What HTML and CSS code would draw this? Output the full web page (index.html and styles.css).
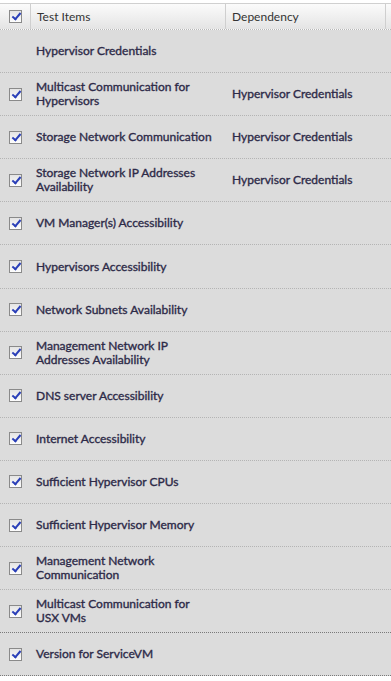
FILE: index.html
```html
<!DOCTYPE html>
<html lang="en">
<head>
    <meta charset="UTF-8">
    <meta name="viewport" content="width=device-width, initial-scale=1.0">
    <title>Test Items</title>
    <link rel="stylesheet" href="styles.css">
</head>
<body>
    <div class="grid">
        <div class="head">
            <div class="cell check"><span class="box on"></span></div>
            <div class="cell name">Test Items</div>
            <div class="cell dep">Dependency</div>
            <div class="cell pad"></div>
        </div>

        <div class="row">
            <div class="cell check"></div>
            <div class="cell name">Hypervisor Credentials</div>
            <div class="cell dep"></div>
        </div>
        <div class="row">
            <div class="cell check"><span class="box on"></span></div>
            <div class="cell name">Multicast Communication for Hypervisors</div>
            <div class="cell dep">Hypervisor Credentials</div>
        </div>
        <div class="row">
            <div class="cell check"><span class="box on"></span></div>
            <div class="cell name">Storage Network Communication</div>
            <div class="cell dep">Hypervisor Credentials</div>
        </div>
        <div class="row">
            <div class="cell check"><span class="box on"></span></div>
            <div class="cell name">Storage Network IP Addresses Availability</div>
            <div class="cell dep">Hypervisor Credentials</div>
        </div>
        <div class="row">
            <div class="cell check"><span class="box on"></span></div>
            <div class="cell name">VM Manager(s) Accessibility</div>
            <div class="cell dep"></div>
        </div>
        <div class="row">
            <div class="cell check"><span class="box on"></span></div>
            <div class="cell name">Hypervisors Accessibility</div>
            <div class="cell dep"></div>
        </div>
        <div class="row">
            <div class="cell check"><span class="box on"></span></div>
            <div class="cell name">Network Subnets Availability</div>
            <div class="cell dep"></div>
        </div>
        <div class="row">
            <div class="cell check"><span class="box on"></span></div>
            <div class="cell name">Management Network IP Addresses Availability</div>
            <div class="cell dep"></div>
        </div>
        <div class="row">
            <div class="cell check"><span class="box on"></span></div>
            <div class="cell name">DNS server Accessibility</div>
            <div class="cell dep"></div>
        </div>
        <div class="row">
            <div class="cell check"><span class="box on"></span></div>
            <div class="cell name">Internet Accessibility</div>
            <div class="cell dep"></div>
        </div>
        <div class="row">
            <div class="cell check"><span class="box on"></span></div>
            <div class="cell name">Sufficient Hypervisor CPUs</div>
            <div class="cell dep"></div>
        </div>
        <div class="row">
            <div class="cell check"><span class="box on"></span></div>
            <div class="cell name">Sufficient Hypervisor Memory</div>
            <div class="cell dep"></div>
        </div>
        <div class="row">
            <div class="cell check"><span class="box on"></span></div>
            <div class="cell name">Management Network Communication</div>
            <div class="cell dep"></div>
        </div>
        <div class="row dark">
            <div class="cell check"><span class="box on"></span></div>
            <div class="cell name">Multicast Communication for USX VMs</div>
            <div class="cell dep"></div>
        </div>
        <div class="row dark">
            <div class="cell check"><span class="box on"></span></div>
            <div class="cell name">Version for ServiceVM</div>
            <div class="cell dep"></div>
        </div>
    </div>
</body>
</html>
```

FILE: styles.css
```css
body {
    margin: 0;
    padding: 3px 0 0 0;
    background-color: #ffffff;
    font-family: Lato, "Open Sans", sans-serif;
    overflow: hidden;
}

.grid {
    width: 391px;
    background-color: #dcdcdc;
}

.head {
    display: flex;
    height: 27px;
    box-sizing: border-box;
    border-top: 1px solid #d0d0d0;
    border-bottom: 1px dotted #b8b8b8;
    background: linear-gradient(#fbfbfb, #e4e4e4);
    font-size: 12px;
    color: #333;
}

.head .cell {
    display: flex;
    align-items: center;
    border-right: 1px solid #cfcfcf;
}

.head .check {
    width: 30px;
    justify-content: center;
}

.head .name {
    width: 195px;
    padding-left: 6px;
    box-sizing: border-box;
}

.head .dep {
    width: 160px;
    padding-left: 6px;
    box-sizing: border-box;
}

.head .pad {
    width: 3px;
    border-right: none;
}

.row {
    display: flex;
    align-items: center;
    height: 43.1px;
    box-sizing: border-box;
    border-bottom: 1px dotted #b4b4b4;
    font-size: 12px;
    color: #2d2a48;
    -webkit-text-stroke: 0.35px #2d2a48;
    line-height: 14px;
}

.row.dark {
    border-bottom: 1px dotted #7a7a7a;
}

.row .check {
    width: 30px;
    display: flex;
    justify-content: center;
}

.row .name {
    width: 195px;
    padding: 0 12px 0 6px;
    box-sizing: border-box;
}

.row .dep {
    padding-left: 7px;
}

.box {
    display: block;
    width: 13px;
    height: 13px;
    box-sizing: border-box;
    border: 1px solid #8a8a8a;
    background: linear-gradient(#e4e4e4, #fdfdfd);
    position: relative;
}

.box.on::after {
    content: '';
    position: absolute;
    left: 4px;
    top: 0px;
    width: 3px;
    height: 7px;
    border: solid #2a3fb8;
    border-width: 0 2px 2px 0;
    transform: rotate(40deg);
}
```
